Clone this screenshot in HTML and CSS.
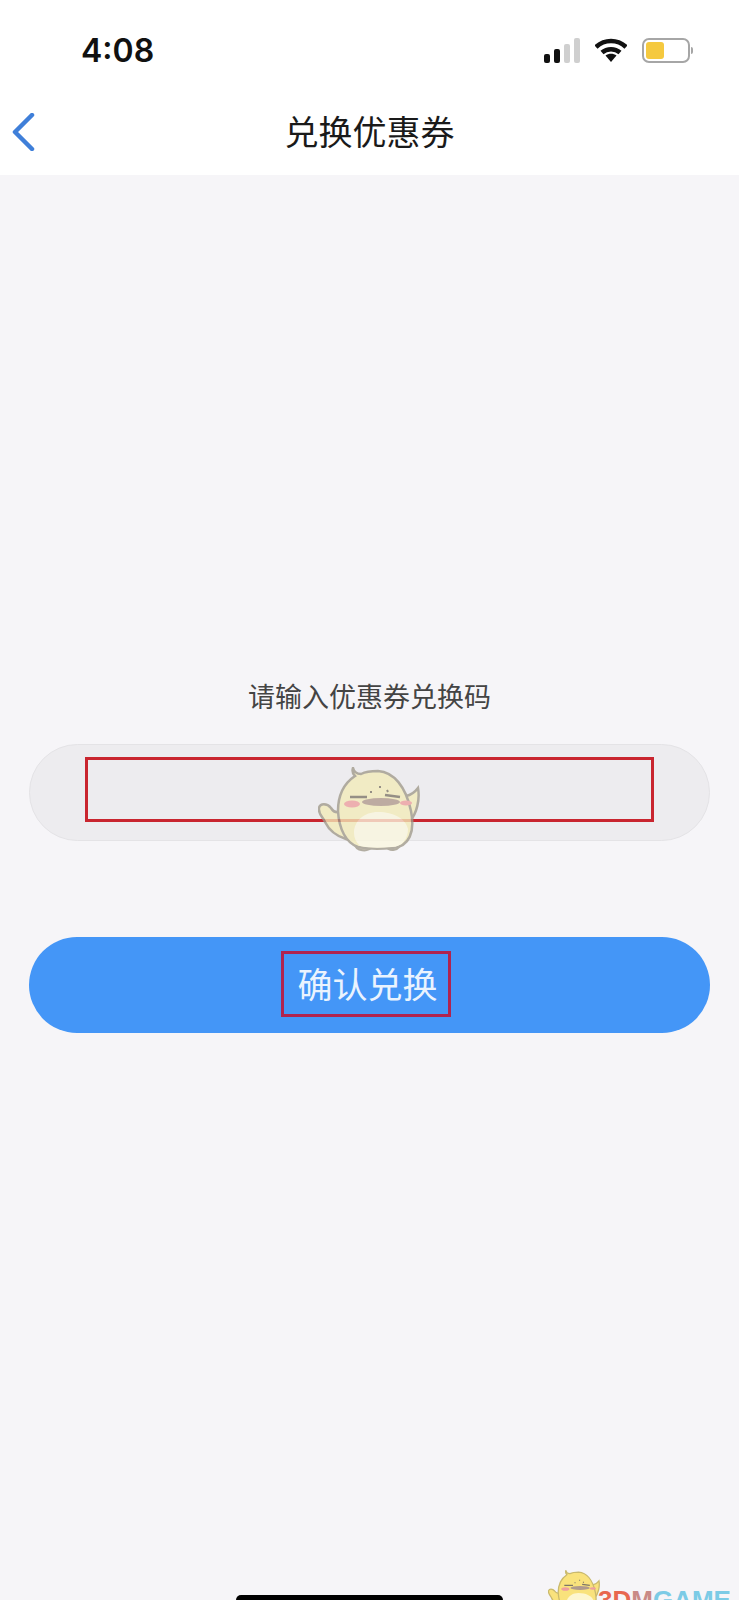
FILE: index.html

```html
<!DOCTYPE html>
<html lang="zh-CN">
<head>
    <meta charset="UTF-8">
    <meta name="viewport" content="width=device-width, initial-scale=1.0">
    <title>兑换优惠券</title>
    <link rel="stylesheet" href="styles.css">
</head>
<body>
    <svg class="defs" width="0" height="0">
        <symbol id="chick" viewBox="0 0 102 86">
            <path class="chick-wing" d="M24 44C20 46 16 46 13 41C9 36 2 36 1 41C0 47 5 50 7 55C11 63 18 69 28 72Z"/>
            <path class="chick-wing" d="M88 29C93 28 97 25 100 21C102 32 99 46 92 54Z"/>
            <path class="chick-foot" d="M36 76C38 85 50 85 54 80ZM68 80C72 85 81 84 83 76Z"/>
            <path class="chick-body" d="M35 1C36 5 39 7 43 7C47 5 53 4 60 4C76 5 88 20 93 44C97 64 92 80 74 81C62 82 50 82 40 80C28 76 21 62 20 44C20 30 25 17 37 9C35 7 34 4 35 1Z"/>
            <path class="chick-belly" d="M36 66C36 54 46 45 60 45C76 45 88 52 90 62C90 72 84 80 74 80C62 81 50 81 42 79C38 75 36 71 36 66Z"/>
            <path class="chick-line" d="M32 30L49 30M67 28L82 30"/>
            <path class="chick-dots" d="M53 24L53 26M62 19L62 21M69 23L70 25"/>
            <ellipse class="chick-mouth" cx="63" cy="35" rx="19" ry="4"/>
            <ellipse class="chick-cheek" cx="34" cy="37" rx="8" ry="3.500"/>
            <ellipse class="chick-cheek" cx="88" cy="36" rx="6" ry="2.500"/>
        </symbol>
    </svg>

    <div id="screen">
        <div id="status-bar">
            <span class="time">4:08</span>
            <div class="status-icons">
                <div class="signal">
                    <i class="bar bar-1"></i>
                    <i class="bar bar-2"></i>
                    <i class="bar bar-3"></i>
                    <i class="bar bar-4"></i>
                </div>
                <svg class="wifi" width="32" height="24" viewBox="0 0 32 24">
                    <path d="M1 9C9.500 1 22.500 1 31 9" />
                    <path d="M7 14.500C12 10 20 10 25 14.500" />
                    <path class="wifi-tip" d="M10.500 17.500C13.500 15 18.500 15 21.500 17.500L16 24Z" />
                </svg>
                <div class="battery">
                    <div class="battery-body"><div class="battery-fill"></div></div>
                    <div class="battery-nub"></div>
                </div>
            </div>
        </div>

        <div id="nav-bar">
            <svg class="back" width="24" height="38" viewBox="0 0 24 38">
                <path d="M21 2L4 19L21 36" />
            </svg>
            <h1>兑换优惠券</h1>
        </div>

        <div id="content">
            <p class="label">请输入优惠券兑换码</p>
            <div class="code-input">
                <div class="mark mark-input"></div>
            </div>
            <div class="confirm-button">
                <div class="mark mark-button">确认兑换</div>
            </div>
        </div>

        <svg class="chick chick-center"><use href="#chick"/></svg>

        <div class="home-indicator"></div>

        <div class="watermark">
            <svg class="chick chick-small"><use href="#chick"/></svg>
            <span class="wm-text"><b>3D</b><em>M</em>GAME</span>
        </div>
    </div>
</body>
</html>
```

FILE: styles.css

```css
:root {
    --bg-color: #f6f5f8;
    --blue: #4496f7;
    --red: #c9252f;
}

html, body {
    margin: 0;
    padding: 0;
}

.defs { position: absolute; }

#screen {
    position: relative;
    width: 739px;
    height: 1600px;
    overflow: hidden;
    background-color: var(--bg-color);
    font-family: "Noto Sans CJK SC", "Liberation Sans", sans-serif;
}

#status-bar {
    height: 100px;
    background-color: #fff;
    display: flex;
    justify-content: space-between;
    align-items: center;
    padding: 0 46px 0 81px;
    box-sizing: border-box;
}
.time {
    font-family: Inter, "Liberation Sans", sans-serif;
    font-weight: 600;
    font-size: 32px;
    color: #111;
}
.status-icons {
    display: flex;
    align-items: center;
    gap: 15px;
}
.signal {
    display: flex;
    align-items: flex-end;
    gap: 4px;
    height: 25px;
}
.bar {
    width: 6px;
    background-color: #111;
    border-radius: 2px;
}
.bar-1 { height: 9px; }
.bar-2 { height: 14px; }
.bar-3 { height: 19px; background-color: #cfcfcf; }
.bar-4 { height: 25px; background-color: #cfcfcf; }

.wifi path {
    fill: none;
    stroke: #111;
    stroke-width: 4.500;
}
.wifi .wifi-tip { fill: #111; stroke: none; }

.battery {
    display: flex;
    align-items: center;
    gap: 1px;
}
.battery-body {
    width: 40px;
    height: 17px;
    border: 2px solid #a6a6a6;
    border-radius: 7px;
    padding: 2px;
}
.battery-fill {
    width: 18px;
    height: 17px;
    background-color: #f5c93f;
    border-radius: 3px;
}
.battery-nub {
    width: 2px;
    height: 7px;
    background-color: #a6a6a6;
    border-radius: 0 2px 2px 0;
}

#nav-bar {
    height: 75px;
    background-color: #fff;
    display: flex;
    justify-content: center;
    align-items: center;
    position: relative;
    padding-bottom: 14px;
    box-sizing: border-box;
}
#nav-bar h1 {
    margin: 0;
    font-size: 34px;
    font-weight: 400;
    color: #1a1a1a;
    line-height: 40px;
}
.back {
    position: absolute;
    left: 11px;
    top: 13px;
}
.back path {
    fill: none;
    stroke: #3f7fd9;
    stroke-width: 4.500;
    stroke-linecap: round;
    stroke-linejoin: round;
}

#content {
    display: flex;
    flex-direction: column;
    align-items: center;
    padding: 0 29px;
}
.label {
    margin: 499px 0 0;
    font-size: 27px;
    line-height: 44px;
    color: #444;
}
.code-input {
    width: 100%;
    height: 97px;
    margin-top: 26px;
    box-sizing: border-box;
    background-color: #edecef;
    border: 1px solid #e4e3e6;
    border-radius: 49px;
    display: flex;
    justify-content: center;
    padding-top: 12px;
}
.mark {
    box-sizing: border-box;
    border: 3px solid var(--red);
}
.mark-input {
    width: 569px;
    height: 65px;
}
.confirm-button {
    width: 100%;
    height: 96px;
    margin-top: 96px;
    background-color: var(--blue);
    border-radius: 48px;
    display: flex;
    justify-content: center;
    padding-top: 14px;
    box-sizing: border-box;
}
.mark-button {
    width: 170px;
    height: 66px;
    margin-left: -7px;
    display: flex;
    justify-content: center;
    align-items: center;
    font-size: 35px;
    line-height: 44px;
    color: #eaf3fe;
    border-color: #b0234f;
    padding-left: 3px;
    padding-bottom: 3px;
}

/* watermarks lying over the page */
.chick { position: absolute; }
.chick-center {
    --chick-fill: #f3ebb8;
    --chick-line: #a09a8a;
    --chick-belly: #fbf7df;
    left: 318px;
    top: 767px;
    width: 102px;
    height: 86px;
    opacity: 0.78;
}
.chick-small {
    --chick-fill: #f9e27c;
    --chick-line: #c9b96e;
    --chick-belly: #fdf6d0;
    left: 1px;
    top: 0;
    width: 52px;
    height: 44px;
}
.chick-body, .chick-wing { fill: var(--chick-fill); stroke: var(--chick-line); stroke-width: 2.500; }
.chick-foot { fill: #c4b8a8; stroke: var(--chick-line); stroke-width: 2; }
.chick-belly { fill: var(--chick-belly); }
.chick-line { fill: none; stroke: #7d7568; stroke-width: 2.500; }
.chick-dots { fill: none; stroke: #7d7568; stroke-width: 2; }
.chick-mouth { fill: #b09a8c; }
.chick-cheek { fill: #ee9f9f; }

.home-indicator {
    position: absolute;
    left: 236px;
    bottom: 0;
    width: 267px;
    height: 5px;
    background-color: #000;
    border-radius: 6px 6px 0 0;
}

.watermark {
    position: absolute;
    left: 547px;
    top: 1570px;
    width: 192px;
    height: 30px;
}
.wm-text {
    position: absolute;
    left: 51px;
    top: 17px;
    font-family: "Liberation Sans", sans-serif;
    font-weight: 700;
    font-size: 26px;
    line-height: 26px;
    white-space: nowrap;
    color: #7ccbe6;
}
.wm-text b { color: #e8674f; }
.wm-text em { font-style: normal; color: #c98a86; }
```
